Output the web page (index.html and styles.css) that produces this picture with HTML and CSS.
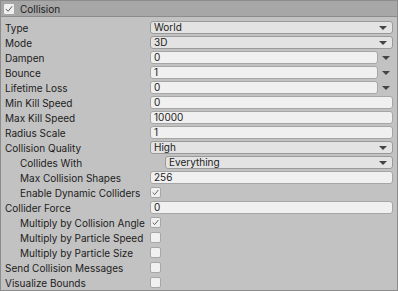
FILE: index.html
```html
<!DOCTYPE html>
<html lang="en">
<head>
    <meta charset="UTF-8">
    <title>Collision</title>
    <link rel="stylesheet" href="styles.css">
</head>
<body>
    <div class="panel">
        <div class="header">
            <span class="check on"><svg viewBox="0 0 11 11"><polyline points="2,5.5 4.5,8 9,2.5"/></svg></span>
            <span class="title">Collision</span>
        </div>
        <div class="rows">
            <div class="row">
                <label>Type</label>
                <div class="select">World<i class="arrow"></i></div>
            </div>
            <div class="row">
                <label>Mode</label>
                <div class="select">3D<i class="arrow"></i></div>
            </div>
            <div class="row">
                <label>Dampen</label>
                <div class="curve"><div class="input">0</div><i class="arrow"></i></div>
            </div>
            <div class="row">
                <label>Bounce</label>
                <div class="curve"><div class="input">1</div><i class="arrow"></i></div>
            </div>
            <div class="row">
                <label>Lifetime Loss</label>
                <div class="curve"><div class="input">0</div><i class="arrow"></i></div>
            </div>
            <div class="row">
                <label>Min Kill Speed</label>
                <div class="input">0</div>
            </div>
            <div class="row">
                <label>Max Kill Speed</label>
                <div class="input">10000</div>
            </div>
            <div class="row">
                <label>Radius Scale</label>
                <div class="input">1</div>
            </div>
            <div class="row">
                <label>Collision Quality</label>
                <div class="select">High<i class="arrow"></i></div>
            </div>
            <div class="row indent">
                <label>Collides With</label>
                <div class="select shifted">Everything<i class="arrow"></i></div>
            </div>
            <div class="row indent">
                <label>Max Collision Shapes</label>
                <div class="input">256</div>
            </div>
            <div class="row indent">
                <label>Enable Dynamic Colliders</label>
                <span class="check on"><svg viewBox="0 0 11 11"><polyline points="2,5.5 4.5,8 9,2.5"/></svg></span>
            </div>
            <div class="row">
                <label>Collider Force</label>
                <div class="input">0</div>
            </div>
            <div class="row indent">
                <label>Multiply by Collision Angle</label>
                <span class="check on"><svg viewBox="0 0 11 11"><polyline points="2,5.5 4.5,8 9,2.5"/></svg></span>
            </div>
            <div class="row indent">
                <label>Multiply by Particle Speed</label>
                <span class="check"></span>
            </div>
            <div class="row indent">
                <label>Multiply by Particle Size</label>
                <span class="check"></span>
            </div>
            <div class="row">
                <label>Send Collision Messages</label>
                <span class="check"></span>
            </div>
            <div class="row">
                <label>Visualize Bounds</label>
                <span class="check"></span>
            </div>
        </div>
    </div>
</body>
</html>
```

FILE: styles.css
```css
html, body {
    margin: 0;
    padding: 0;
    background-color: #c2c2c2;
}
body {
    font-family: Inter, "Noto Sans", sans-serif;
    font-size: 10px;
    color: #1c1c1c;
}
.panel {
    width: 396px;
    height: 289px;
    border: 1px solid #8c8c8c;
    background-color: #c2c2c2;
    overflow: hidden;
}
.header {
    display: flex;
    align-items: center;
    height: 15px;
    padding-left: 2px;
    background-color: #a7a7a7;
    border-bottom: 1px solid #8c8c8c;
}
.header .title {
    margin-left: 5px;
}
.rows {
    padding: 3px 4px 0 4px;
}
.row {
    display: grid;
    grid-template-columns: 145px 1fr;
    align-items: center;
    height: 15px;
}
.row label {
    white-space: nowrap;
}
.row.indent label {
    padding-left: 15px;
}
.input,
.select {
    position: relative;
    height: 11px;
    line-height: 11px;
    padding-left: 3px;
    border: 1px solid #a6a6a6;
    border-radius: 3px;
    background-color: #f0f0f0;
    white-space: nowrap;
}
.select {
    background-color: #e3e3e3;
    border-color: #9a9a9a;
}
.select.shifted {
    margin-left: 15px;
}
.select .arrow {
    position: absolute;
    right: 5px;
    top: 4px;
}
.arrow {
    display: block;
    width: 0;
    height: 0;
    border-left: 4px solid transparent;
    border-right: 4px solid transparent;
    border-top: 4px solid #444;
}
.curve {
    display: flex;
    align-items: center;
}
.curve .input {
    flex: 1;
}
.curve .arrow {
    margin: 1px 3px 0 4px;
}
.check {
    display: block;
    box-sizing: border-box;
    width: 11px;
    height: 11px;
    border: 1px solid #a6a6a6;
    border-radius: 2px;
    background-color: #f0f0f0;
}
.check svg {
    display: block;
    width: 9px;
    height: 9px;
}
.check polyline {
    fill: none;
    stroke: #333;
    stroke-width: 0.9;
}
.header .check {
    width: 12px;
    height: 12px;
}
.header .check svg {
    width: 10px;
    height: 10px;
}
```
